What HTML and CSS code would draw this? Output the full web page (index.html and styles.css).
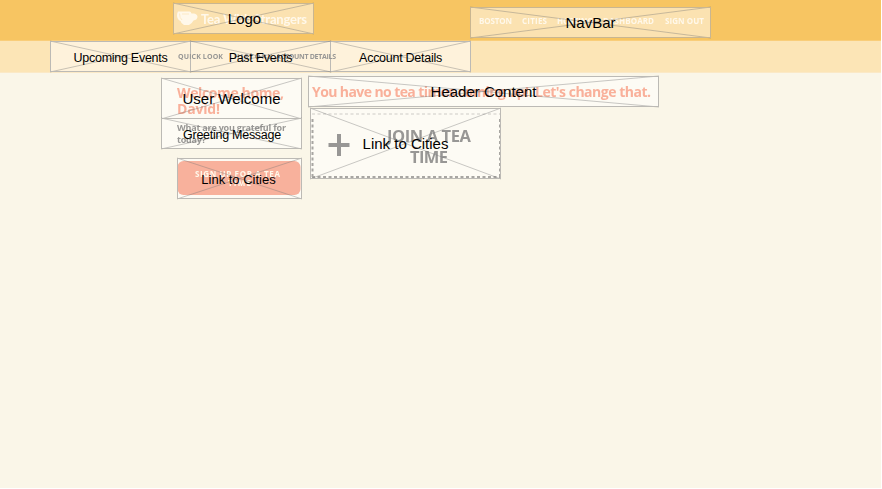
FILE: index.html
```html
<!DOCTYPE html>
<html lang="en">
<head>
<meta charset="utf-8">
<title>Tea With Strangers</title>
<link rel="stylesheet" href="styles.css">
</head>
<body>
<div class="page">
  <header class="topbar">
    <div class="box logo">
      <svg class="art" viewBox="0 0 141 31">
        <g class="ghost-white blur">
          <path d="M5 8.500h11.500q1.500 0 2 2h2.500q3.500.500 3.500 3.500-.500 3-4 3.500-1.500 3-4.500 4.500h-5q-3-1.500-3.500-4-3-1-3.500-5 0-3.500 1-4.500z"/>
          <text class="script" x="28" y="20.500" textLength="106">Tea With Strangers</text>
        </g>
        <path class="cup-line" d="M6.500 10.500q0 4.500 2.500 6.500M9 11h7"/>
        <path class="cross" d="M0 0 141 31M0 31 141 0"/>
      </svg>
      <span class="label nudge">Logo</span>
    </div>
    <nav class="box navbar">
      <svg class="art" viewBox="0 0 241 31">
        <g class="ghost-white caps blur">
          <text x="9" y="16.500" textLength="33">BOSTON</text>
          <text x="52" y="16.500" textLength="25">CITIES</text>
          <text x="87" y="16.500" textLength="36">HOSTING</text>
          <text x="133" y="16.500" textLength="51">DASHBOARD</text>
          <text x="195" y="16.500" textLength="39">SIGN OUT</text>
        </g>
        <path class="cross" d="M0 0 241 31M0 31 241 0"/>
      </svg>
      <span class="label">NavBar</span>
    </nav>
  </header>
  <div class="tabs">
    <div class="box tab">
      <svg class="art" viewBox="0 0 141 31"><path class="cross" d="M0 0 141 31M0 31 141 0"/></svg>
      <span class="label small">Upcoming Events</span>
    </div>
    <div class="box tab">
      <svg class="art front" viewBox="0 0 141 31">
        <g class="ghost-gray tiny blur">
          <text x="-12" y="18" textLength="45">QUICK LOOK</text>
          <text x="44" y="18" textLength="38">HISTORY</text>
          <text x="86" y="18" textLength="60">ACCOUNT DETAILS</text>
        </g>
        <path class="cross" d="M0 0 141 31M0 31 141 0"/>
      </svg>
      <span class="label small">Past Events</span>
    </div>
    <div class="box tab">
      <svg class="art" viewBox="0 0 141 31"><path class="cross" d="M0 0 141 31M0 31 141 0"/></svg>
      <span class="label small">Account Details</span>
    </div>
  </div>
  <main class="content">
    <aside class="side">
      <div class="box welcome">
        <svg class="art" viewBox="0 0 141 41">
          <g class="ghost-salmon heading blur">
            <text x="16" y="19.500" textLength="107">Welcome home,</text>
            <text x="16" y="36" textLength="43">David!</text>
          </g>
          <path class="cross" d="M0 0 141 41M0 41 141 0"/>
        </svg>
        <span class="label">User Welcome</span>
      </div>
      <div class="box greeting">
        <svg class="art" viewBox="0 0 141 31">
          <g class="ghost-gray body blur">
            <text x="16" y="13" textLength="109">What are you grateful for</text>
            <text x="16" y="25" textLength="29">today?</text>
          </g>
          <path class="cross" d="M0 0 141 31M0 31 141 0"/>
        </svg>
        <span class="label small">Greeting Message</span>
      </div>
      <div class="box signup">
        <svg class="art" viewBox="0 0 125 41">
          <rect class="button blur" x="0.5" y="3" width="123" height="34" rx="6"/>
          <g class="ghost-white caps blur">
            <text x="18" y="19" textLength="85">SIGN UP FOR A TEA</text>
            <text x="51" y="28" textLength="23">TIME</text>
          </g>
          <path class="cross" d="M0 0 125 41M0 41 125 0"/>
        </svg>
        <span class="label medium">Link to Cities</span>
      </div>
    </aside>
    <section class="primary">
      <div class="box headline">
        <svg class="art" viewBox="0 0 351 31">
          <g class="ghost-salmon headline-text blur">
            <text x="4" y="21" textLength="217">You have no tea times coming up!</text>
            <text x="227" y="21" textLength="116">Let's change that.</text>
          </g>
          <path class="cross" d="M0 0 351 31M0 31 351 0"/>
        </svg>
        <span class="label">Header Content</span>
      </div>
      <div class="box join">
        <svg class="art" viewBox="0 0 191 71">
          <path class="dash-light" d="M2 6H190"/>
          <path class="dash" d="M2.500 11V69M190 11V69M2 69H190"/>
          <path class="plus blur" d="M29 26V48M18.500 37H39.500"/>
          <g class="ghost-gray join-text blur">
            <text x="77" y="34" textLength="84">JOIN A TEA</text>
            <text x="100" y="54.500" textLength="38">TIME</text>
          </g>
          <path class="cross" d="M0 0 191 71M0 71 191 0"/>
        </svg>
        <span class="label">Link to Cities</span>
      </div>
    </section>
  </main>
</div>
</body>
</html>
```
FILE: styles.css
```css
* { box-sizing: border-box; }

body {
  margin: 0;
  background: #fff;
  font-family: "Liberation Sans", Arial, sans-serif;
  color: #000;
}

.page {
  width: 881px;
  height: 488px;
  background: #faf6e8;
}

.topbar {
  display: flex;
  align-items: flex-start;
  height: 41px;
  padding: 3px 0 0 173px;
  background: #f7c562;
  border-bottom: 1px solid #f9cd79;
}

.tabs {
  display: flex;
  height: 32px;
  padding-left: 50px;
  background: #fce5b6;
  border-bottom: 1px solid #fbe9c6;
}

.content {
  display: flex;
  gap: 6px;
  padding: 3px 0 0 161px;
}

.side {
  display: flex;
  flex-direction: column;
  align-items: flex-end;
  width: 141px;
  padding-top: 2px;
}

/* Wireframe region: translucent panel with a crossed frame */
.box {
  position: relative;
  display: grid;
  place-items: center;
  flex: none;
  height: 31px;
  background: rgba(255, 255, 255, .5);
}

.box::after {
  content: "";
  position: absolute;
  inset: 0;
  border: 1px solid #bcbab5;
}

.logo { width: 141px; }
.navbar { width: 241px; margin: 4px 0 0 156px; }
.logo::after, .navbar::after { border-color: #c9b691; }
.tab { width: 141px; }
.tab + .tab { margin-left: -1px; }
.welcome { width: 141px; height: 41px; }
.greeting { width: 141px; margin-top: -1px; }
.signup { width: 125px; height: 41px; margin-top: 9px; }
.headline { width: 351px; }
.join { width: 191px; height: 71px; margin: 1px 0 0 2px; }

.art {
  position: absolute;
  inset: 0;
  width: 100%;
  height: 100%;
  overflow: visible;
}

.front { z-index: 1; }

.label {
  position: relative;
  z-index: 2;
  font-size: 15px;
  line-height: 17px;
  white-space: nowrap;
}

.nudge { left: 1px; }
.medium { font-size: 13px; top: 1px; left: -1px; }
.small { font-size: 12.500px; letter-spacing: -.27px; top: 2px; }
.greeting .small { top: 1.500px; left: .500px; }

.cross { fill: none; stroke: #777; stroke-opacity: .5; stroke-width: .8; }
.blur { filter: blur(.6px); }

.ghost-white { fill: #fff8ea; }
.ghost-gray { fill: #989795; }
.ghost-salmon { fill: #f9b09a; }

.cup-line { fill: none; stroke: #fbe0ae; stroke-width: .6; }

.script { font: 700 13px Lato, sans-serif; }
.caps { font: 700 8px "Open Sans", sans-serif; }
.tiny { font: 700 7px "Open Sans", sans-serif; }
.heading { font: 700 14px "Open Sans", sans-serif; }
.body { font: 700 9px "Open Sans", sans-serif; }
.headline-text { font: 700 14px "Open Sans", sans-serif; }
.join-text { font: 700 16.500px "Open Sans", sans-serif; }

.button { fill: #f8b19c; }
.plus { fill: none; stroke: #989795; stroke-width: 4; }
.dash { fill: none; stroke: #a8a6a2; stroke-width: 2; stroke-dasharray: 3 2.500; }
.dash-light { fill: none; stroke: #dddbd5; stroke-width: 1.500; stroke-dasharray: 3 2.500; }
```
